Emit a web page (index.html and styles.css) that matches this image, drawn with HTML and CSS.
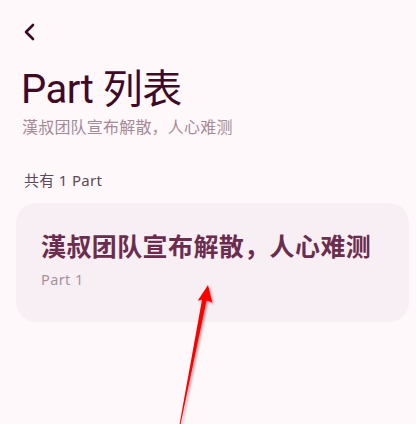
FILE: index.html
```html
<!DOCTYPE html>
<html lang="zh">
<head>
<meta charset="utf-8">
<link rel="stylesheet" href="styles.css">
</head>
<body>
<div class="page">
  <div class="topbar">
    <svg class="back" width="14" height="18" viewBox="0 0 14 18"><path d="M11 2 L4 9 L11 16" fill="none" stroke="#3a0a24" stroke-width="2.6" stroke-linecap="round" stroke-linejoin="round"/></svg>
  </div>
  <h1 class="title">Part 列表</h1>
  <p class="subtitle">漢叔团队宣布解散，人心难测</p>
  <p class="count">共有 1 Part</p>
  <div class="card">
    <div class="card-title">漢叔团队宣布解散，人心难测</div>
    <div class="card-sub">Part 1</div>
  </div>
</div>
<svg class="annot" width="416" height="424" viewBox="0 0 416 424">
  <defs>
    <filter id="sh" x="-50%" y="-50%" width="200%" height="200%">
      <feDropShadow dx="1.5" dy="1.5" stdDeviation="1" flood-color="#000" flood-opacity="0.35"/>
    </filter>
  </defs>
  <polygon filter="url(#sh)" fill="#ff0000" points="208,285 212.3,302.5 206.6,300.6 180.6,424 179.6,424 202.0,299.8 197.7,300.7"/>
</svg>
</body>
</html>
```
FILE: styles.css
```css
html, body {
  margin: 0;
  padding: 0;
  background: #fff8fb;
}
body {
  font-family: "Noto Sans", "Noto Sans CJK SC", sans-serif;
  width: 416px;
  height: 424px;
  overflow: hidden;
  position: relative;
}
.page {
  padding: 0 16px;
}
.topbar {
  height: 66px;
  display: flex;
  align-items: flex-start;
  padding-top: 23px;
  padding-left: 6px;
  box-sizing: border-box;
}
.back {
  display: block;
}
.title {
  margin: 0;
  padding-left: 5px;
  font-family: Roboto, "Noto Sans CJK SC", sans-serif;
  font-size: 40px;
  font-weight: 400;
  line-height: 48px;
  color: #3e0a26;
  letter-spacing: -0.5px;
}
.subtitle {
  margin: 2px 0 0;
  padding-left: 6px;
  font-size: 16px;
  line-height: 22px;
  color: #a48a97;
  letter-spacing: 0.2px;
}
.count {
  margin: 32px 0 0;
  padding-left: 8px;
  font-size: 15px;
  line-height: 20px;
  color: #5d4a54;
  letter-spacing: 0.3px;
}
.card {
  margin-top: 13px;
  background: #f8eff4;
  border-radius: 20px;
  height: 119px;
  padding: 26px 25px 0;
  box-sizing: border-box;
  width: 393px;
}
.card-title {
  font-family: "Noto Sans CJK SC", sans-serif;
  font-size: 25px;
  line-height: 32px;
  font-weight: 700;
  color: #6b2d4d;
  letter-spacing: 0.4px;
}
.card-sub {
  margin-top: 8px;
  font-size: 14.5px;
  line-height: 20px;
  color: #a8919d;
  letter-spacing: 0.4px;
}
.annot {
  position: absolute;
  left: 0;
  top: 0;
  pointer-events: none;
}
```
